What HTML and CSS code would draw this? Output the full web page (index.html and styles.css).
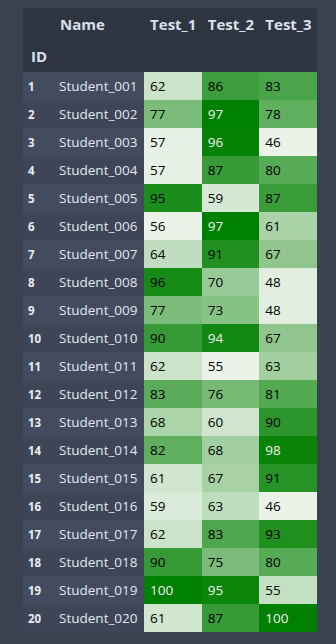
FILE: index.html
```html
<!DOCTYPE html>
<html>
<head>
<meta charset="utf-8">
<link rel="stylesheet" href="styles.css">
</head>
<body>
<div class="wrap">
<table class="grid">
  <colgroup>
    <col class="c-id"><col class="c-name"><col class="c-t"><col class="c-t"><col class="c-t">
  </colgroup>
  <thead>
    <tr class="hrow"><th></th><th class="nmh">Name</th><th>Test_1</th><th>Test_2</th><th>Test_3</th></tr>
    <tr class="hrow"><th class="idh">ID</th><th></th><th></th><th></th><th></th></tr>
  </thead>
  <tbody>
    <tr><th>1</th><td class="nm">Student_001</td><td class="g" style="--p:13.6%">62</td><td class="g" style="--p:73.8%">86</td><td class="g" style="--p:68.5%">83</td></tr>
    <tr><th>2</th><td class="nm">Student_002</td><td class="g" style="--p:47.7%">77</td><td class="g hi" style="--p:100%">97</td><td class="g" style="--p:59.3%">78</td></tr>
    <tr><th>3</th><td class="nm">Student_003</td><td class="g" style="--p:2.3%">57</td><td class="g hi" style="--p:97.6%">96</td><td class="g" style="--p:0%">46</td></tr>
    <tr><th>4</th><td class="nm">Student_004</td><td class="g" style="--p:2.3%">57</td><td class="g" style="--p:76.2%">87</td><td class="g" style="--p:63%">80</td></tr>
    <tr><th>5</th><td class="nm">Student_005</td><td class="g" style="--p:88.6%">95</td><td class="g" style="--p:9.5%">59</td><td class="g" style="--p:75.9%">87</td></tr>
    <tr><th>6</th><td class="nm">Student_006</td><td class="g" style="--p:0%">56</td><td class="g hi" style="--p:100%">97</td><td class="g" style="--p:27.8%">61</td></tr>
    <tr><th>7</th><td class="nm">Student_007</td><td class="g" style="--p:18.2%">64</td><td class="g" style="--p:85.7%">91</td><td class="g" style="--p:38.9%">67</td></tr>
    <tr><th>8</th><td class="nm">Student_008</td><td class="g" style="--p:90.9%">96</td><td class="g" style="--p:35.7%">70</td><td class="g" style="--p:3.7%">48</td></tr>
    <tr><th>9</th><td class="nm">Student_009</td><td class="g" style="--p:47.7%">77</td><td class="g" style="--p:42.9%">73</td><td class="g" style="--p:3.7%">48</td></tr>
    <tr><th>10</th><td class="nm">Student_010</td><td class="g" style="--p:77.3%">90</td><td class="g hi" style="--p:92.9%">94</td><td class="g" style="--p:38.9%">67</td></tr>
    <tr><th>11</th><td class="nm">Student_011</td><td class="g" style="--p:13.6%">62</td><td class="g" style="--p:0%">55</td><td class="g" style="--p:31.5%">63</td></tr>
    <tr><th>12</th><td class="nm">Student_012</td><td class="g" style="--p:61.4%">83</td><td class="g" style="--p:50%">76</td><td class="g" style="--p:64.8%">81</td></tr>
    <tr><th>13</th><td class="nm">Student_013</td><td class="g" style="--p:27.3%">68</td><td class="g" style="--p:11.9%">60</td><td class="g" style="--p:81.5%">90</td></tr>
    <tr><th>14</th><td class="nm">Student_014</td><td class="g" style="--p:59.1%">82</td><td class="g" style="--p:31%">68</td><td class="g hi" style="--p:96.3%">98</td></tr>
    <tr><th>15</th><td class="nm">Student_015</td><td class="g" style="--p:11.4%">61</td><td class="g" style="--p:28.6%">67</td><td class="g" style="--p:83.3%">91</td></tr>
    <tr><th>16</th><td class="nm">Student_016</td><td class="g" style="--p:6.8%">59</td><td class="g" style="--p:19%">63</td><td class="g" style="--p:0%">46</td></tr>
    <tr><th>17</th><td class="nm">Student_017</td><td class="g" style="--p:13.6%">62</td><td class="g" style="--p:66.7%">83</td><td class="g" style="--p:87%">93</td></tr>
    <tr><th>18</th><td class="nm">Student_018</td><td class="g" style="--p:77.3%">90</td><td class="g" style="--p:47.6%">75</td><td class="g" style="--p:63%">80</td></tr>
    <tr><th>19</th><td class="nm">Student_019</td><td class="g hi" style="--p:100%">100</td><td class="g hi" style="--p:95.2%">95</td><td class="g" style="--p:16.7%">55</td></tr>
    <tr><th>20</th><td class="nm">Student_020</td><td class="g" style="--p:11.4%">61</td><td class="g" style="--p:76.2%">87</td><td class="g hi" style="--p:100%">100</td></tr>
  </tbody>
</table>
</div>
</body>
</html>
```

FILE: styles.css
```css
html, body {
  margin: 0;
  padding: 0;
  background: #3a4151;
}
body {
  font-family: "Open Sans", "Noto Sans", sans-serif;
}
.wrap {
  padding: 8px 0 0 23px;
}
.grid {
  border-collapse: collapse;
  border-spacing: 0;
  table-layout: fixed;
  width: 294px;
}
.c-id { width: 27px; }
.c-name { width: 94px; }
.c-t { width: 57.6px; }
.grid th, .grid td {
  padding: 0 0 0 6px;
  text-align: left;
  white-space: nowrap;
  overflow: hidden;
}
.grid thead th {
  background: #2e3440;
  color: #d8e0ee;
  font-weight: 700;
  font-size: 15px;
  height: 32px;
  line-height: 32px;
  vertical-align: middle;
}
.grid thead th.idh {
  padding-left: 8px;
}
.grid thead th.nmh {
  padding-left: 10px;
}
.grid tbody tr {
  height: 28px;
}
.grid tbody tr:nth-child(odd) th,
.grid tbody tr:nth-child(odd) td.nm {
  background: #434c5e;
}
.grid tbody tr:nth-child(even) th,
.grid tbody tr:nth-child(even) td.nm {
  background: #3d4557;
}
.grid tbody th {
  font-size: 11.5px;
  font-weight: 700;
  color: #e8ecf3;
  padding-left: 5px;
  vertical-align: middle;
}
.grid tbody td {
  font-size: 13.5px;
  line-height: 18px;
  vertical-align: middle;
}
.grid td.nm {
  color: #e2e7f0;
  padding-left: 9px;
}
.grid td.g {
  background: color-mix(in srgb, #008000 var(--p), #ebf3e9);
  color: #000000;
}
.grid td.g.hi {
  color: #f1f1f1;
}
```
